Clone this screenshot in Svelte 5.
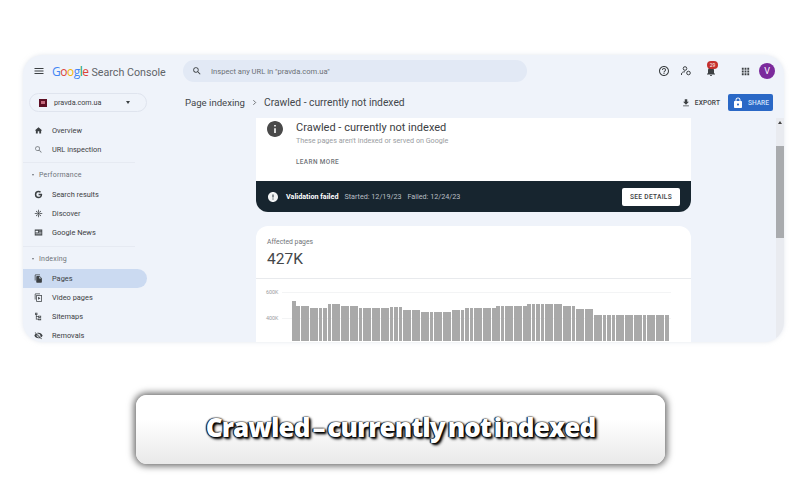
<script>
    const icons = {
        home: 'M10 20v-6h4v6h5v-8h3L12 3 2 12h3v8z',
        search: 'M15.5 14h-.79l-.28-.27A6.471 6.471 0 0 0 16 9.5 6.5 6.5 0 1 0 9.5 16c1.61 0 3.09-.59 4.23-1.57l.27.28v.79l5 4.99L20.49 19l-4.99-5zm-6 0C7.01 14 5 11.99 5 9.5S7.01 5 9.5 5 14 7.01 14 9.5 11.99 14 9.5 14z',
        google: 'M21.6 10.2h-9.4v3.7h5.4c-.6 2.6-2.7 4.1-5.4 4.1a6 6 0 0 1 0-12c1.5 0 2.9.5 3.9 1.4l2.7-2.7A9.9 9.9 0 0 0 12.2 2a10 10 0 1 0 0 20c5.5 0 9.6-3.9 9.6-10 0-.6-.1-1.2-.2-1.8z',
        discover: 'M11 2h2v6.2l-1 1-1-1V2zm0 13.8l1-1 1 1V22h-2v-6.2zM2 11h6.2l1 1-1 1H2v-2zm13.8 0H22v2h-6.2l-1-1 1-1zM4.9 6.3l1.4-1.4 4 4-1.4 1.4-4-4zm8.8 8.8l1.4-1.4 4 4-1.4 1.4-4-4zM6.3 19.1l-1.4-1.4 4-4 1.4 1.4-4 4zm8.8-8.8l-1.4-1.4 4-4 1.4 1.4-4 4zM12 9.5a2.5 2.5 0 1 1 0 5 2.5 2.5 0 0 1 0-5z',
        news: 'M2 4h20v16H2V4zm2 3v5h7V7H4zm9 0v1.5h7V7h-7zm0 3.5V12h7v-1.5h-7zM4 14v1.5h16V14H4zm0 3v1h16v-1H4z',
        pages: 'M16 1H4c-1.1 0-2 .9-2 2v14h2V3h12V1zm-1 4l6 6v10c0 1.1-.9 2-2 2H7.99C6.89 23 6 22.1 6 21l.01-14c0-1.1.89-2 1.99-2h7zm-1 7h5.5L14 6.5V12z',
        video: 'M16 1H4c-1.1 0-2 .9-2 2v14h2V3h12V1zM8 5h13v18H6V5h2zm0 2v14h11V7H8zm3 3l6 4-6 4v-8z',
        sitemap: 'M3 2h6v6H7v3h4v-1h8v5h-8v-2H7v5h4v-1h8v5h-8v-2H5V8H3V2zm2 2v2h2V4H5zm8 8v1h4v-1h-4zm0 6v1h4v-1h-4z',
        removals: 'M12 7c2.76 0 5 2.24 5 5 0 .65-.13 1.26-.36 1.83l2.92 2.92c1.51-1.26 2.7-2.89 3.43-4.75-1.73-4.39-6-7.5-11-7.5-1.4 0-2.74.25-3.98.7l2.16 2.16C10.74 7.13 11.35 7 12 7zM2 4.27l2.28 2.28.46.46C3.08 8.3 1.78 10.02 1 12c1.73 4.39 6 7.5 11 7.5 1.55 0 3.03-.3 4.38-.84l.42.42L19.73 22 21 20.73 3.27 3 2 4.27zM7.53 9.8l1.55 1.55c-.05.21-.08.43-.08.65 0 1.66 1.34 3 3 3 .22 0 .44-.03.65-.08l1.55 1.55c-.67.33-1.41.53-2.2.53-2.76 0-5-2.24-5-5 0-.79.2-1.53.53-2.2zm4.31-.78l3.15 3.15.02-.16c0-1.66-1.34-3-3-3l-.17.01z'
    };

    const topNav = [
        { label: 'Overview', icon: 'home' },
        { label: 'URL inspection', icon: 'search', light: true }
    ];
    const performance = [
        { label: 'Search results', icon: 'google' },
        { label: 'Discover', icon: 'discover' },
        { label: 'Google News', icon: 'news' }
    ];
    const indexing = [
        { label: 'Pages', icon: 'pages', active: true },
        { label: 'Video pages', icon: 'video' },
        { label: 'Sitemaps', icon: 'sitemap' },
        { label: 'Removals', icon: 'removals' }
    ];

    // [number of bars, height in px]
    const runs = [
        [1, 40], [3, 35.5], [4, 33.5], [3, 37.5], [4, 35.5], [3, 33.5], [4, 33],
        [3, 34.5], [4, 31.5], [7, 29], [3, 31], [7, 33.5], [7, 35], [8, 37.5],
        [3, 35], [4, 32.5], [17, 26]
    ];
    const bars = runs.flatMap(([count, height]) => Array(count).fill(height));
</script>

{#snippet navRow(item)}
    <div class="nav-row" class:active={item.active}>
        <svg class="nav-icon" class:light={item.light} viewBox="0 0 24 24"><path d={icons[item.icon]} /></svg>
        <span>{item.label}</span>
    </div>
{/snippet}

<main class="page">
    <div class="frame">
        <header class="topbar">
            <svg class="menu" viewBox="0 0 24 24"><path d="M3 18h18v-2H3v2zm0-5h18v-2H3v2zm0-7v2h18V6H3z" /></svg>
            <div class="logo">
                <span class="word"><span class="b">G</span><span class="r">o</span><span class="y">o</span><span class="b">g</span><span class="g">l</span><span class="r">e</span></span>
                <span class="product">Search Console</span>
            </div>
            <div class="search">
                <svg viewBox="0 0 24 24"><path d={icons.search} /></svg>
                <span>Inspect any URL in "pravda.com.ua"</span>
            </div>
            <div class="top-actions">
                <svg class="act help" viewBox="0 0 24 24"><path d="M11 18h2v-2h-2v2zm1-16C6.48 2 2 6.48 2 12s4.48 10 10 10 10-4.48 10-10S17.52 2 12 2zm0 18c-4.41 0-8-3.59-8-8s3.59-8 8-8 8 3.59 8 8-3.59 8-8 8zm0-14c-2.21 0-4 1.79-4 4h2c0-1.1.9-2 2-2s2 .9 2 2c0 2-3 1.75-3 5h2c0-2.25 3-2.5 3-5 0-2.21-1.79-4-4-4z" /></svg>
                <svg class="act user" viewBox="0 0 24 24"><circle cx="10" cy="7" r="3.6" /><path d="M3 20v-2c0-3 3-4.5 7-4.5" /><circle cx="17" cy="16" r="3.6" /></svg>
                <div class="bell">
                    <svg viewBox="0 0 24 24"><path d="M12 22c1.1 0 2-.9 2-2h-4c0 1.1.9 2 2 2zm6-6v-5c0-3.07-1.63-5.64-4.5-6.32V4c0-.83-.67-1.5-1.5-1.5s-1.5.67-1.5 1.5v.68C7.64 5.36 6 7.92 6 11v5l-2 2v1h16v-1l-2-2z" /></svg>
                    <span class="badge">29</span>
                </div>
                <svg class="act apps" viewBox="0 0 24 24"><path d="M4 8h4V4H4v4zm6 12h4v-4h-4v4zm-6 0h4v-4H4v4zm0-6h4v-4H4v4zm6 0h4v-4h-4v4zm6-10v4h4V4h-4zm-6 4h4V4h-4v4zm6 6h4v-4h-4v4zm0 6h4v-4h-4v4z" /></svg>
                <span class="avatar">V</span>
            </div>
        </header>

        <div class="body">
            <nav class="sidebar">
                <div class="property">
                    <span class="favicon"><i></i></span>
                    <span class="domain">pravda.com.ua</span>
                    <span class="caret"></span>
                </div>
                <div class="group first">
                    {#each topNav as item}{@render navRow(item)}{/each}
                </div>
                <div class="group">
                    <div class="heading"><span class="mini-caret"></span>Performance</div>
                    {#each performance as item}{@render navRow(item)}{/each}
                </div>
                <div class="group">
                    <div class="heading"><span class="mini-caret"></span>Indexing</div>
                    {#each indexing as item}{@render navRow(item)}{/each}
                </div>
            </nav>

            <div class="main">
                <div class="toolbar">
                    <div class="crumbs">
                        <span>Page indexing</span>
                        <svg viewBox="0 0 24 24"><path d="M8 4l8 8-8 8" /></svg>
                        <span class="current">Crawled - currently not indexed</span>
                    </div>
                    <div class="export">
                        <svg viewBox="0 0 24 24"><path d="M19 9h-4V3H9v6H5l7 7 7-7zM5 18v2h14v-2H5z" /></svg>
                        <span>EXPORT</span>
                    </div>
                    <div class="share">
                        <svg viewBox="0 0 24 24"><path d="M18 8h-1V6c0-2.76-2.24-5-5-5S7 3.24 7 6v2H6c-1.1 0-2 .9-2 2v10c0 1.1.9 2 2 2h12c1.1 0 2-.9 2-2V10c0-1.1-.9-2-2-2zm-6 9c-1.1 0-2-.9-2-2s.9-2 2-2 2 .9 2 2-.9 2-2 2zm3.1-9H8.9V6c0-1.71 1.39-3.1 3.1-3.1 1.71 0 3.1 1.39 3.1 3.1v2z" /></svg>
                        <span>SHARE</span>
                    </div>
                </div>

                <div class="content">
                    <div class="column">
                        <section class="status">
                            <div class="status-head">
                                <svg class="info" viewBox="2 2 20 20"><path d="M12 2C6.48 2 2 6.48 2 12s4.48 10 10 10 10-4.48 10-10S17.52 2 12 2zm1 15h-2v-6h2v6zm0-8h-2V7h2v2z" /></svg>
                                <div>
                                    <h1>Crawled - currently not indexed</h1>
                                    <p>These pages aren't indexed or served on Google</p>
                                    <div class="learn">LEARN MORE</div>
                                </div>
                            </div>
                            <div class="validation">
                                <svg class="alert" viewBox="2 2 20 20"><path d="M12 2C6.48 2 2 6.48 2 12s4.48 10 10 10 10-4.48 10-10S17.52 2 12 2zm1 15h-2v-2h2v2zm0-4h-2V7h2v6z" /></svg>
                                <strong>Validation failed</strong>
                                <span>Started: 12/19/23</span>
                                <span>Failed: 12/24/23</span>
                                <div class="details">SEE DETAILS</div>
                            </div>
                        </section>

                        <section class="affected">
                            <div class="totals">
                                <div class="caption">Affected pages</div>
                                <div class="count">427K</div>
                            </div>
                            <div class="chart">
                                <div class="ticks">
                                    <div class="tick"><span>600K</span><i></i></div>
                                    <div class="tick"><span>400K</span><i></i></div>
                                </div>
                                <div class="bars">
                                    {#each bars as height}
                                        <div class="bar" style="height: {height}px"></div>
                                    {/each}
                                </div>
                            </div>
                        </section>
                    </div>

                    <div class="scrollbar">
                        <span class="arrow"></span>
                        <div class="thumb"></div>
                    </div>
                </div>
            </div>
        </div>
    </div>

    <div class="title-card">
        <div class="title">Crawled – currently not indexed</div>
    </div>
</main>

<style>
    :global(body) {
        margin: 0;
        background: #fff;
    }
    .page {
        width: 800px;
        height: 480px;
        overflow: hidden;
        padding: 55px 0 0 23px;
        box-sizing: border-box;
        font-family: Roboto, "Liberation Sans", sans-serif;
        color: #3c4043;
    }
    .frame {
        width: 761px;
        height: 287px;
        overflow: hidden;
        border-radius: 20px;
        background: #eff3fa;
        box-shadow: 0 0 4px rgba(200, 208, 222, 0.5);
    }
    svg {
        display: block;
        fill: #3c4043;
        flex: none;
    }

    /* top bar */
    .topbar {
        display: flex;
        align-items: center;
        height: 32px;
        padding-left: 10px;
    }
    .menu {
        width: 12px;
        height: 12px;
    }
    .logo {
        display: flex;
        align-items: baseline;
        width: 131px;
        margin-left: 7px;
        white-space: nowrap;
    }
    .word {
        font-family: "Open Sans", sans-serif;
        font-size: 12px;
        letter-spacing: -0.5px;
    }
    .b { color: #4285f4; }
    .r { color: #db4437; }
    .y { color: #f4b400; }
    .g { color: #0f9d58; }
    .product {
        margin-left: 3px;
        font-size: 10.7px;
        color: #5f6368;
    }
    .search {
        display: flex;
        align-items: center;
        gap: 9px;
        width: 344px;
        height: 22px;
        padding-left: 9px;
        box-sizing: border-box;
        border-radius: 11px;
        background: #e2e9f5;
        font-size: 7.6px;
        color: #6b7076;
    }
    .search svg {
        width: 10px;
        height: 10px;
    }
    .top-actions {
        display: flex;
        align-items: center;
        margin-left: 131px;
    }
    .act {
        width: 12px;
        height: 12px;
    }
    .user {
        margin-left: 10px;
        fill: none;
        stroke: #3c4043;
        stroke-width: 2;
    }
    .bell {
        position: relative;
        margin-left: 13px;
    }
    .bell svg {
        width: 12px;
        height: 12px;
    }
    .badge {
        position: absolute;
        top: -4px;
        left: 2px;
        width: 11px;
        height: 8px;
        border-radius: 5px;
        background: #c5302c;
        color: #fff;
        font-size: 5px;
        line-height: 8px;
        text-align: center;
    }
    .apps {
        margin-left: 23px;
        width: 11px;
        height: 11px;
    }
    .avatar {
        width: 16px;
        height: 16px;
        margin-left: 8px;
        border-radius: 50%;
        background: #7b2a9c;
        color: #fff;
        font-size: 9px;
        line-height: 16px;
        text-align: center;
    }

    /* sidebar */
    .body {
        display: flex;
    }
    .sidebar {
        flex: none;
        width: 124px;
        padding-top: 6px;
    }
    .property {
        display: flex;
        align-items: center;
        width: 118px;
        height: 19px;
        margin-left: 6px;
        box-sizing: border-box;
        border: 1px solid #dfe4ee;
        border-radius: 10px;
        font-size: 7.2px;
    }
    .favicon {
        display: flex;
        align-items: center;
        justify-content: center;
        width: 8px;
        height: 8px;
        margin-left: 9px;
        background: #5e0f24;
    }
    .favicon i {
        width: 4px;
        height: 3px;
        background: #c56a7d;
    }
    .domain {
        margin-left: 7px;
    }
    .caret {
        margin-left: 25px;
        border: 2.5px solid transparent;
        border-top: 3px solid #3c4043;
        border-bottom: 0;
    }
    .group {
        padding-bottom: 4.5px;
    }
    .group.first {
        margin-top: 9px;
        padding-bottom: 3px;
    }
    .group + .group {
        width: 112px;
        border-top: 1px solid #e6eaf2;
    }
    .heading {
        display: flex;
        align-items: center;
        height: 21.5px;
        padding: 2px 0 0 9px;
        box-sizing: border-box;
        font-size: 7px;
        letter-spacing: 0.2px;
        color: #6d7278;
    }
    .mini-caret {
        margin-right: 5px;
        border: 1.5px solid transparent;
        border-top: 2px solid #6d7278;
        border-bottom: 0;
    }
    .nav-row {
        display: flex;
        align-items: center;
        gap: 9px;
        width: 124px;
        height: 19px;
        padding-left: 11px;
        box-sizing: border-box;
        font-size: 7.4px;
    }
    .nav-row.active {
        border-radius: 0 10px 10px 0;
        background: #cbdaf1;
    }
    .nav-icon {
        width: 9px;
        height: 9px;
    }
    .nav-icon.light {
        fill: #70757a;
    }

    /* toolbar and content */
    .main {
        flex: 1;
        min-width: 0;
    }
    .toolbar {
        display: flex;
        align-items: center;
        height: 31px;
        padding-left: 38px;
        font-size: 9.6px;
    }
    .crumbs {
        display: flex;
        align-items: center;
        gap: 6px;
        color: #43474b;
    }
    .crumbs svg {
        width: 7px;
        height: 7px;
        fill: none;
        stroke: #3c4043;
        stroke-width: 2.4;
    }
    .current {
        font-size: 10.3px;
    }
    .export {
        display: flex;
        align-items: center;
        gap: 4px;
        margin-left: auto;
        font-size: 6.6px;
        font-weight: 500;
        letter-spacing: 0.1px;
    }
    .export svg {
        width: 10px;
        height: 10px;
    }
    .share {
        display: flex;
        align-items: center;
        gap: 4px;
        height: 17px;
        margin: 0 11px 0 8px;
        padding: 0 4px 0 4px;
        border-radius: 2px;
        background: #2a68c6;
        color: #cfe0fa;
        font-size: 6.6px;
        font-weight: 500;
    }
    .share svg {
        width: 12px;
        height: 12px;
        fill: #fff;
    }
    .content {
        display: flex;
        height: 224px;
        overflow: hidden;
    }
    .column {
        width: 435px;
        margin-left: 109px;
    }
    .status {
        height: 94px;
        overflow: hidden;
        border-radius: 0 0 12px 12px;
        background: #fff;
    }
    .status-head {
        display: flex;
        height: 63px;
        box-sizing: border-box;
        padding: 3px 0 0 11px;
    }
    .info {
        width: 16px;
        height: 16px;
        margin-right: 13px;
        fill: #4a4a4a;
    }
    h1 {
        margin: 0;
        font-size: 11px;
        font-weight: 400;
        line-height: 13px;
        color: #3c4043;
    }
    p {
        margin: 2px 0 0;
        font-size: 7.2px;
        line-height: 10px;
        color: #9a9da1;
    }
    .learn {
        margin-top: 12px;
        font-size: 6.4px;
        font-weight: 500;
        letter-spacing: 0.4px;
        color: #6f7377;
    }
    .validation {
        display: flex;
        align-items: center;
        height: 31px;
        padding-left: 12px;
        background: #17252f;
        font-size: 7.2px;
        color: #b9bfc4;
    }
    .alert {
        width: 10px;
        height: 10px;
        margin-right: 8px;
        fill: #f1f3f4;
    }
    .validation strong {
        margin-right: 6px;
        font-weight: 700;
        color: #fff;
    }
    .validation span {
        margin-right: 6px;
    }
    .details {
        margin: 0 11px 0 auto;
        width: 58px;
        height: 18px;
        border-radius: 2px;
        background: #fff;
        color: #3c4043;
        font-size: 6.6px;
        font-weight: 500;
        letter-spacing: 0.3px;
        line-height: 18px;
        text-align: center;
    }
    .affected {
        height: 130px;
        margin-top: 14px;
        border-radius: 12px 12px 0 0;
        background: #fff;
    }
    .totals {
        height: 53px;
        box-sizing: border-box;
        padding: 12px 0 0 11px;
        border-bottom: 1px solid #e8eaed;
    }
    .caption {
        font-size: 6.8px;
        line-height: 8px;
        color: #6f7377;
    }
    .count {
        margin-top: 4px;
        font-size: 15.5px;
        line-height: 18px;
        color: #44474a;
    }
    .chart {
        position: relative;
        height: 62px;
    }
    .ticks {
        position: absolute;
        inset: 10px 0 0 10px;
        display: flex;
        flex-direction: column;
        gap: 20px;
    }
    .tick {
        display: flex;
        align-items: center;
        gap: 4px;
        height: 6px;
        font-size: 5.4px;
        color: #999ca0;
    }
    .tick i {
        flex: 1;
        height: 1px;
        margin-right: 20px;
        background: #f3f4f5;
    }
    .bars {
        position: absolute;
        left: 36px;
        bottom: 0;
        display: flex;
        align-items: flex-end;
        gap: 0.6px;
        width: 376px;
    }
    .bar {
        flex: 1;
        background: #a9a9a9;
    }
    .scrollbar {
        display: flex;
        flex-direction: column;
        align-items: center;
        width: 8px;
        margin-left: 85px;
        background: #e9ebf0;
    }
    .arrow {
        margin-top: 3px;
        border: 2px solid transparent;
        border-bottom: 3px solid #444;
        border-top: 0;
    }
    .thumb {
        width: 8px;
        height: 92px;
        margin-top: 22px;
        background: #a9abae;
    }

    /* caption card */
    .title-card {
        display: flex;
        align-items: center;
        justify-content: center;
        width: 529px;
        height: 69px;
        margin: 53px 0 0 113px;
        padding-bottom: 5px;
        box-sizing: border-box;
        border-radius: 11px;
        background: linear-gradient(#ffffff 35%, #e9e9e9);
        box-shadow: 0 0 7px 2px rgba(0, 0, 0, 0.6);
    }
    .title {
        font-family: "Open Sans", sans-serif;
        font-size: 26px;
        font-weight: 800;
        letter-spacing: -0.9px;
        word-spacing: -3px;
        color: #fff;
        white-space: nowrap;
        text-shadow: 0 0 2px #000, 1px 1px 2px #000, 2px 2px 3px #000, -1px 0 1px #000;
    }
</style>
